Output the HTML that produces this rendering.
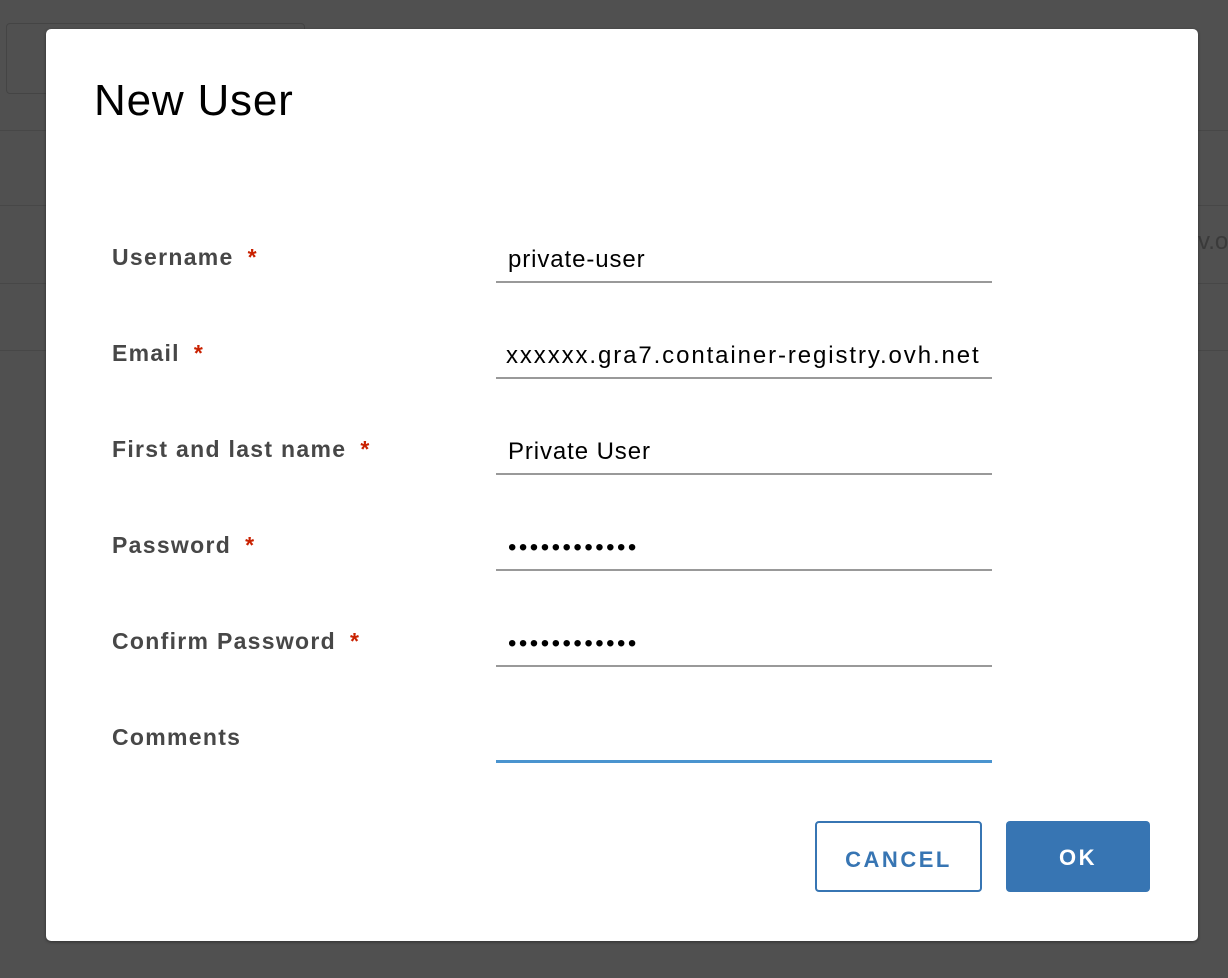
<!DOCTYPE html>
<html><head><meta charset="utf-8"><style>
body{margin:0;width:1228px;height:978px;background:#505050;position:relative;overflow:hidden;font-family:"Liberation Sans",sans-serif}
.bg1{position:absolute;left:6px;top:23px;width:297px;height:69px;border:1px solid #444;border-radius:4px}
.hl{position:absolute;left:0;width:1228px;height:1px;background:#474747}
.modal{position:absolute;left:46px;top:29px;width:1152px;height:912px;background:#fff;border-radius:5px;box-shadow:0 1px 3px rgba(0,0,0,.4)}
h1{position:absolute;left:48px;top:47px;margin:0;font-weight:normal;font-size:44px;letter-spacing:0.8px;color:#000;line-height:50px}
.lbl{position:absolute;left:66px;font-weight:bold;font-size:23px;letter-spacing:1.3px;color:#474747;line-height:30px}
.lbl span{color:#c92100;margin-left:14px}
.inp{position:absolute;left:450px;width:496px;height:40px;border-bottom:2px solid #999;font-size:24px;letter-spacing:0.9px;color:#000;line-height:34px;box-sizing:border-box;padding-left:12px;white-space:nowrap}
.btn{position:absolute;top:792px;height:71px;box-sizing:border-box;border-radius:4px;font-size:22px;font-weight:bold;letter-spacing:2.5px;text-align:center;line-height:73px}
</style></head><body>
<div class="bg1"></div>
<div class="hl" style="top:130px"></div>
<div class="hl" style="top:205px"></div>
<div class="hl" style="top:283px"></div>
<div class="hl" style="top:350px"></div>
<div style="position:absolute;left:1198px;top:228px;font-size:24px;color:#3a3a3a">v.ov</div>
<div class="modal">
<h1>New User</h1>
<div class="lbl" style="top:213px">Username<span>*</span></div>
<div class="inp" style="top:214px">private-user</div>
<div class="lbl" style="top:309px">Email<span>*</span></div>
<div class="inp" style="top:310px;padding-left:10px;letter-spacing:1.9px">xxxxxx.gra7.container-registry.ovh.net</div>
<div class="lbl" style="top:405px">First and last name<span>*</span></div>
<div class="inp" style="top:406px">Private User</div>
<div class="lbl" style="top:501px">Password<span>*</span></div>
<div class="inp" style="top:502px;letter-spacing:2.5px">••••••••••••</div>
<div class="lbl" style="top:597px">Confirm Password<span>*</span></div>
<div class="inp" style="top:598px;letter-spacing:2.5px">••••••••••••</div>
<div class="lbl" style="top:693px">Comments</div>
<div class="inp" style="top:694px;border-bottom:3px solid #4a94cf;height:40px"></div>
<div class="btn" style="left:769px;width:167px;border:2px solid #3775b3;color:#3775b3;background:#fff">CANCEL</div>
<div class="btn" style="left:960px;width:144px;background:#3775b3;color:#fff">OK</div>
</div>
</body></html>
